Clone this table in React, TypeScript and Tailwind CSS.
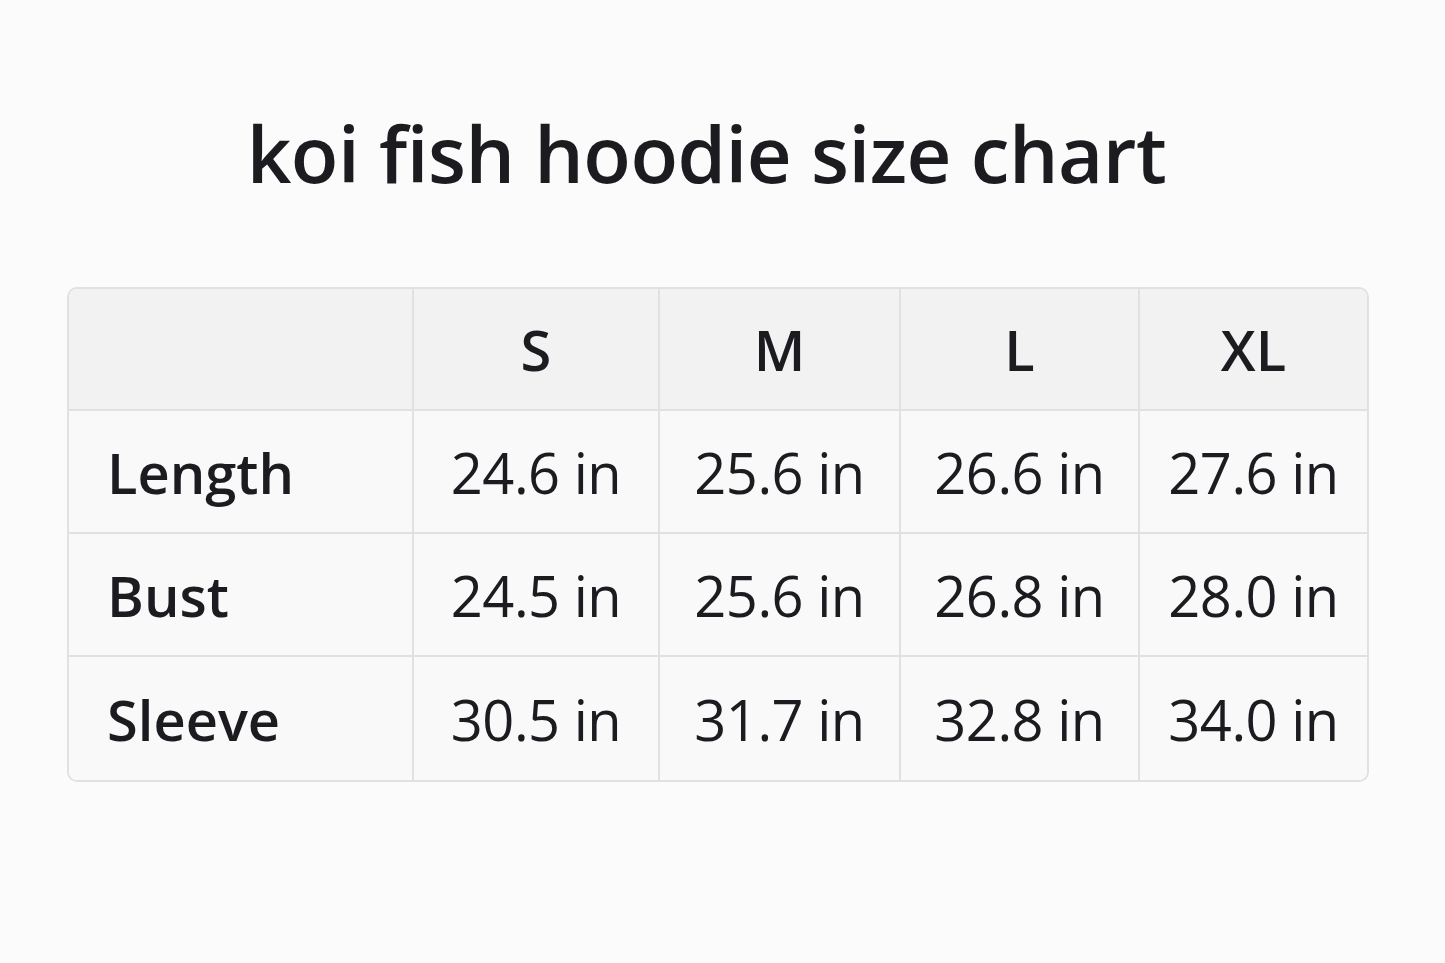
import React from 'react';

const sizes = ['S', 'M', 'L', 'XL'];

const rows = [
  { label: 'Length', values: ['24.6 in', '25.6 in', '26.6 in', '27.6 in'] },
  { label: 'Bust', values: ['24.5 in', '25.6 in', '26.8 in', '28.0 in'] },
  { label: 'Sleeve', values: ['30.5 in', '31.7 in', '32.8 in', '34.0 in'] },
];

export default function App() {
  return (
    <div
      className="w-full h-[963px] bg-[#fbfbfb] text-[#1b1b20] flex flex-col"
      style={{ fontFamily: '"Open Sans", "Noto Sans", sans-serif' }}
    >
      {/* Title */}
      <h1 className="text-center text-[78px] font-semibold leading-none tracking-[-0.5px] pt-[114px] pr-[32px]">
        koi fish hoodie size chart
      </h1>

      {/* Size table */}
      <div className="ml-[67px] mt-[95px] w-[1302px] rounded-[10px] border-2 border-[#e1e1e1] overflow-hidden grid grid-cols-[345px_246px_241px_239px_1fr]">
        <div className="h-[122px] bg-[#f2f2f2] border-r-2 border-b-2 border-[#e1e1e1]" />
        {sizes.map((s, i) => (
          <div
            key={s}
            className={`h-[122px] bg-[#f2f2f2] border-b-2 border-[#e1e1e1] flex items-center justify-center text-[56px] font-semibold ${
              i < sizes.length - 1 ? 'border-r-2' : ''
            }`}
          >
            {s}
          </div>
        ))}

        {rows.map((row, r) => (
          <React.Fragment key={row.label}>
            <div
              className={`h-[123px] bg-[#f9f9f9] border-r-2 border-[#e1e1e1] flex items-center pl-[38px] text-[56px] font-semibold ${
                r < rows.length - 1 ? 'border-b-2' : ''
              }`}
            >
              {row.label}
            </div>
            {row.values.map((v, i) => (
              <div
                key={i}
                className={`h-[123px] bg-[#f9f9f9] border-[#e1e1e1] flex items-center justify-center text-[56px] tracking-[-0.5px] ${
                  i < row.values.length - 1 ? 'border-r-2' : ''
                } ${r < rows.length - 1 ? 'border-b-2' : ''}`}
              >
                {v}
              </div>
            ))}
          </React.Fragment>
        ))}
      </div>
    </div>
  );
}
